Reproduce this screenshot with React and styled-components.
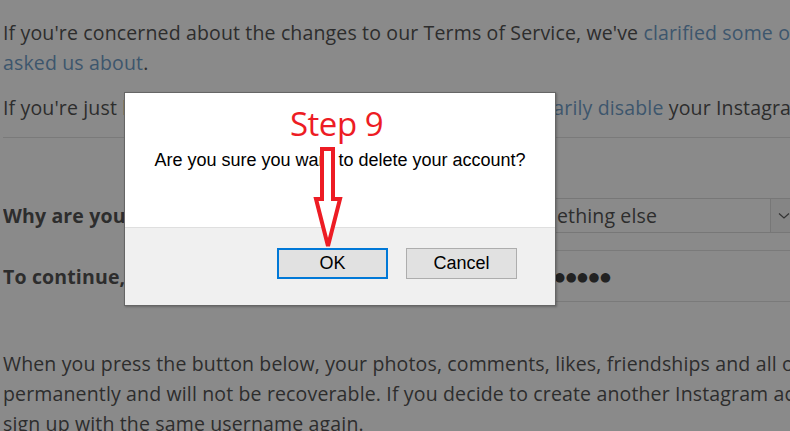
import React from "react";
import styled, { createGlobalStyle } from "styled-components";

const Global = createGlobalStyle`
  html, body { margin: 0; padding: 0; }
  body { background: #8a8a8a; overflow: hidden; width: 790px; height: 431px; }
`;

const Page = styled.div`
  position: relative;
  width: 790px;
  height: 431px;
  overflow: hidden;
  background: #8a8a8a;
  font-family: "Open Sans", Lato, sans-serif;
  font-size: 19.5px;
  letter-spacing: 0.15px;
  color: #2d2d2d;
`;

const Content = styled.div`
  padding: 18px 0 0 3px;
  width: 1000px;
`;

const Para = styled.p`
  margin: ${(p) => p.$mt || 0}px 0 0;
  line-height: 30px;
  white-space: nowrap;
`;

const Link = styled.span`
  color: #3d566d;
`;

const Divider = styled.div`
  height: 1px;
  background: #7a7a7a;
  margin-top: ${(p) => p.$mt || 0}px;
`;

const FormRow = styled.div`
  display: flex;
  align-items: center;
  height: ${(p) => p.$h}px;
  margin-top: ${(p) => p.$mt || 0}px;
`;

const Label = styled.div`
  font-weight: 700;
  width: 440px;
  white-space: nowrap;
  overflow: hidden;
`;

const Select = styled.div`
  flex: none;
  width: 350px;
  height: 100%;
  box-sizing: border-box;
  border: 1px solid #777;
  display: flex;
  align-items: center;
  padding-left: 72px;
  position: relative;
  white-space: nowrap;
`;

const Arrow = styled.div`
  position: absolute;
  left: 326px;
  top: 0;
  bottom: 0;
  width: 30px;
  border-left: 1px solid #777;
  background: #858585;
  display: flex;
  align-items: center;
  padding-left: 7px;
  box-sizing: border-box;
`;

const Input = styled.div`
  flex: none;
  width: 350px;
  height: 100%;
  box-sizing: border-box;
  border-top: 1px solid #7a7a7a;
  border-bottom: 1px solid #7a7a7a;
  display: flex;
  align-items: center;
  padding-left: 20px;
  font-family: "DejaVu Sans", sans-serif;
  font-size: 12.5px;
  letter-spacing: 0.5px;
  white-space: nowrap;
  color: #222;
`;

const Dialog = styled.div`
  position: absolute;
  left: 124px;
  top: 92px;
  width: 432px;
  height: 214px;
  box-sizing: border-box;
  border: 1px solid #666;
  background: #f0f0f0;
  display: flex;
  flex-direction: column;
  font-family: "Liberation Sans", Arial, sans-serif;
  letter-spacing: 0;
  color: #000;
  box-shadow: 1px 1px 2px rgba(0, 0, 0, 0.25);
`;

const DialogBody = styled.div`
  height: 135px;
  background: #fff;
  border-bottom: 1px solid #dfdfdf;
  display: flex;
  justify-content: center;
  align-items: center;
  font-size: 18px;
  box-sizing: border-box;
`;

const DialogFooter = styled.div`
  flex: 1;
  display: flex;
  justify-content: flex-end;
  align-items: flex-start;
  gap: 18px;
  padding: 20px 38px 0 0;
`;

const Button = styled.button`
  width: 111px;
  height: 31px;
  box-sizing: border-box;
  background: #e1e1e1;
  border: ${(p) => (p.$focus ? "2px solid #0078d7" : "1px solid #adadad")};
  font-family: "Liberation Sans", Arial, sans-serif;
  font-size: 18px;
  color: #000;
  padding: 0;
  margin: 0;
`;

const StepLabel = styled.div`
  position: absolute;
  left: 290px;
  top: 104px;
  font-family: "Open Sans", sans-serif;
  font-size: 33px;
  line-height: 40px;
  color: #ed1c24;
  letter-spacing: -0.5px;
  white-space: nowrap;
`;

const Annotation = styled.svg`
  position: absolute;
  left: 0;
  top: 0;
  pointer-events: none;
`;

export default function App() {
  return (
    <Page>
      <Global />
      <Content>
        <Para>
          If you're concerned about the changes to our Terms of Service, we've{" "}
          <Link>clarified some of the questions people have</Link>
          <br />
          <Link>asked us about</Link>.
        </Para>
        <Para $mt={15}>
          If you're just looking to take a break, you can simply tempor<Link>arily disable</Link> your Instagram account instead.
        </Para>
        <Divider $mt={14} />
        <FormRow $h={35} $mt={60}>
          <Label>Why are you deleting your account?</Label>
          <Select>
            Something else
            <Arrow>
              <svg width="12" height="8" viewBox="0 0 12 8">
                <path d="M1 1.5 L6 6 L11 1.5" fill="none" stroke="#333" strokeWidth="1.2" />
              </svg>
            </Arrow>
          </Select>
        </FormRow>
        <FormRow $h={52} $mt={17}>
          <Label>To continue, please re-enter your password</Label>
          <Input>●●●●●●●●●●●●●</Input>
        </FormRow>
        <Para $mt={47}>
          When you press the button below, your photos, comments, likes, friendships and all other data will be removed
          <br />
          permanently and will not be recoverable. If you decide to create another Instagram account in the future, you will not be able to
          <br />
          sign up with the same username again.
        </Para>
      </Content>
      <Dialog>
        <DialogBody>
          Are you sure you want to delete your account?
        </DialogBody>
        <DialogFooter>
          <Button $focus>OK</Button>
          <Button>Cancel</Button>
        </DialogFooter>
      </Dialog>
      <StepLabel>Step 9</StepLabel>
      <Annotation width="790" height="431" viewBox="0 0 790 431">
        <path
          d="M322 149 L333 149 L333 199 L340 199 L328 246 L316 199 L322 199 Z"
          fill="#fff"
          stroke="#ed1c24"
          strokeWidth="4"
          strokeLinejoin="miter"
        />
      </Annotation>
    </Page>
  );
}
